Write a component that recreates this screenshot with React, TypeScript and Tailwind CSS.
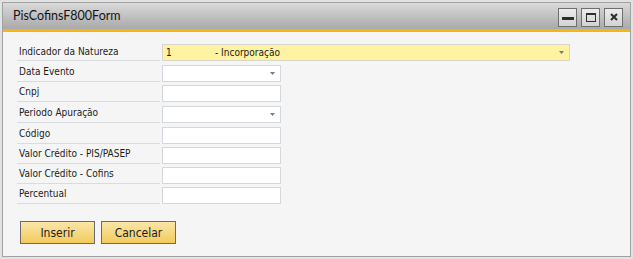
const rows = [
  { label: 'Data Evento', h: 'h-[21px]', combo: true },
  { label: 'Cnpj', h: 'h-[20px]', combo: false },
  { label: 'Periodo Apuração', h: 'h-[21px]', combo: true },
  { label: 'Código', h: 'h-[21px]', combo: false },
  { label: 'Valor Crédito - PIS/PASEP', h: 'h-[20px]', combo: false },
  { label: 'Valor Crédito - Cofins', h: 'h-[20px]', combo: false },
  { label: 'Percentual', h: 'h-[20px]', combo: false },
];

function Arrow() {
  return (
    <svg width="5" height="3" viewBox="0 0 5 3" className="shrink-0">
      <path d="M0 0h5L2.5 3z" fill="#7a7a7a" />
    </svg>
  );
}

function TitleButton({ kind }: { kind: 'min' | 'max' | 'close' }) {
  return (
    <div className="w-[19px] h-[19px] border border-[#6f6f6f] bg-gradient-to-b from-[#ececec] to-[#d2d2d2] flex items-center justify-center">
      {kind === 'min' && <div className="w-[12px] h-[3px] bg-[#2e2e2e] mt-[3px]" />}
      {kind === 'max' && (
        <div className="w-[10px] h-[9px] border border-[#2e2e2e] border-t-[2px]" />
      )}
      {kind === 'close' && (
        <svg width="8" height="8" viewBox="0 0 8 8">
          <path d="M1 1L7 7M7 1L1 7" stroke="#2e2e2e" strokeWidth="2" />
        </svg>
      )}
    </div>
  );
}

export default function App() {
  return (
    <div
      className="w-[633px] h-[259px] bg-[#e2e2e2] p-[2px] text-[#1c1c1c]"
      style={{ fontFamily: "'DejaVu Sans Condensed', 'Liberation Sans', Arial, sans-serif" }}
    >
      <div className="h-full border border-[#a2a2a2] bg-[#f5f5f5] flex flex-col">
        <div className="h-[26px] bg-gradient-to-b from-[#dadada] to-[#a9a9a9] flex items-center justify-between pl-[10px] pr-[7px]">
          <span
            className="text-[12.5px] text-[#141414] mt-[1px]"
            style={{ fontFamily: 'Lato, "Liberation Sans", sans-serif' }}
          >
            PisCofinsF800Form
          </span>
          <div className="flex gap-[4px] mt-[2px]">
            <TitleButton kind="min" />
            <TitleButton kind="max" />
            <TitleButton kind="close" />
          </div>
        </div>
        <div className="h-[3px] bg-[#f5b515]" />
        <div className="flex-1 pl-[14px] pt-[9px] text-[10px]">
          <div className="flex items-end h-[20px]">
            <div className="w-[143px] h-[17px] border-b border-[#d8dce1] flex items-center pl-[2px] pb-[2px]">
              Indicador da Natureza
            </div>
            <div className="ml-[2px] w-[408px] h-[17px] border border-[#d6d6cc] bg-[#fff2a1] flex items-center pl-[3px] pr-[5px]">
              <span className="w-[49px] pb-[1px]">1</span>
              <span className="flex-1 pb-[1px]">- Incorporação</span>
              <Arrow />
            </div>
          </div>
          {rows.map((r) => (
            <div key={r.label} className={`flex items-end ${r.h}`}>
              <div className="w-[143px] h-[17px] border-b border-[#d8dce1] flex items-center pl-[2px] pb-[3px]">
                {r.label}
              </div>
              <div className="ml-[2px] w-[119px] h-[17px] border border-[#d3d8de] bg-white flex items-center justify-end pr-[5px]">
                {r.combo && <Arrow />}
              </div>
            </div>
          ))}
          <div className="flex gap-[6px] mt-[17px] pl-[3px]">
            <button className="w-[75px] h-[23px] border border-[#6b6b6b] bg-gradient-to-b from-[#fbe6a8] to-[#f2cb59] text-[12px] text-[#1c1c1c]">
              Inserir
            </button>
            <button className="w-[75px] h-[23px] border border-[#6b6b6b] bg-gradient-to-b from-[#fbe6a8] to-[#f2cb59] text-[12px] text-[#1c1c1c]">
              Cancelar
            </button>
          </div>
        </div>
      </div>
    </div>
  );
}
